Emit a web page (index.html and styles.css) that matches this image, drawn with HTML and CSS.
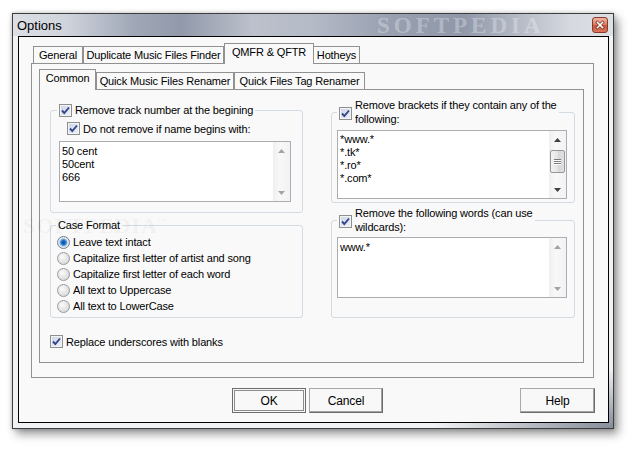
FILE: index.html
```html
<!DOCTYPE html>
<html>
<head>
<meta charset="utf-8">
<link rel="stylesheet" href="styles.css">
</head>
<body>
<div class="window">
  <div class="titlebar">
    <span class="title">Options</span>
    <span class="wm-title">SOFTPEDIA</span>
    <span class="close"><svg width="16" height="16" viewBox="0 0 16 16"><path d="M5 5 L11 11 M11 5 L5 11" stroke="#5a1a10" stroke-width="3.2" stroke-linecap="square"/><path d="M5 5 L11 11 M11 5 L5 11" stroke="#fff" stroke-width="1.8" stroke-linecap="square"/></svg></span>
  </div>
  <div class="client">
    <div class="otabs">
      <div class="strip">
        <div class="tab t-general">General</div>
        <div class="tab t-dup">Duplicate Music Files Finder</div>
        <div class="tab sel t-qmfr">QMFR &amp; QFTR</div>
        <div class="tab t-hot">Hotheys</div>
      </div>
      <div class="opanel">
        <div class="strip istrip">
          <div class="tab sel t-common">Common</div>
          <div class="tab t-qmr">Quick Music Files Renamer</div>
          <div class="tab t-qftr">Quick Files Tag Renamer</div>
        </div>
        <div class="ipanel">
          <div class="col left">
            <fieldset class="grp g1">
              <legend><span class="lg"><span class="cb"><svg viewBox="0 0 11 11"><path d="M2 5.5 L4.3 8 L9 2.5" /></svg></span><span class="lt">Remove track number at the begining</span></span></legend>
              <div class="row sub"><span class="cb"><svg viewBox="0 0 11 11"><path d="M2 5.5 L4.3 8 L9 2.5" /></svg></span><span class="lt">Do not remove if name begins with:</span></div>
              <div class="list l1">
                <div class="items p3">
                  <div>50 cent</div>
                  <div>50cent</div>
                  <div>666</div>
                </div>
                <div class="sb">
                  <div class="sbb"><svg width="7" height="4" viewBox="0 0 7 4"><path class="light" d="M0 4 L3.5 0 L7 4Z"/></svg></div>
                  <div class="sbb"><svg width="7" height="4" viewBox="0 0 7 4"><path class="light" d="M0 0 L3.5 4 L7 0Z"/></svg></div>
                </div>
              </div>
            </fieldset>
            <fieldset class="grp g2">
              <legend><span class="lg">Case Format</span></legend>
              <div class="opt"><span class="rb on"></span><span class="lt">Leave text intact</span></div>
              <div class="opt"><span class="rb"></span><span class="lt">Capitalize first letter of artist and song</span></div>
              <div class="opt"><span class="rb"></span><span class="lt">Capitalize first letter of each word</span></div>
              <div class="opt"><span class="rb"></span><span class="lt">All text to Uppercase</span></div>
              <div class="opt"><span class="rb"></span><span class="lt">All text to LowerCase</span></div>
            </fieldset>
            <div class="row repl"><span class="cb"><svg viewBox="0 0 11 11"><path d="M2 5.5 L4.3 8 L9 2.5" /></svg></span><span class="lt">Replace underscores with blanks</span></div>
          </div>
          <div class="col right">
            <fieldset class="grp r1">
              <legend><span class="lg lg2"><span class="cb"><svg viewBox="0 0 11 11"><path d="M2 5.5 L4.3 8 L9 2.5" /></svg></span><span class="lt">Remove brackets if they contain any of the<br>following:</span></span></legend>
              <div class="list rl1">
                <div class="items p2">
                  <div>*www.*</div>
                  <div>*.tk*</div>
                  <div>*.ro*</div>
                  <div>*.com*</div>
                </div>
                <div class="sb">
                  <div class="sbb"><svg width="7" height="4" viewBox="0 0 7 4"><path class="dark" d="M0 4 L3.5 0 L7 4Z"/></svg></div>
                  <div class="track"><div class="thumb"><span></span><span></span><span></span></div></div>
                  <div class="sbb"><svg width="7" height="4" viewBox="0 0 7 4"><path class="dark" d="M0 0 L3.5 4 L7 0Z"/></svg></div>
                </div>
              </div>
            </fieldset>
            <fieldset class="grp r2">
              <legend><span class="lg lg2"><span class="cb"><svg viewBox="0 0 11 11"><path d="M2 5.5 L4.3 8 L9 2.5" /></svg></span><span class="lt">Remove the following words (can use<br>wildcards):</span></span></legend>
              <div class="list rl2">
                <div class="items p3">
                  <div>www.*</div>
                </div>
                <div class="sb">
                  <div class="sbb"><svg width="7" height="4" viewBox="0 0 7 4"><path class="light" d="M0 4 L3.5 0 L7 4Z"/></svg></div>
                  <div class="sbb"><svg width="7" height="4" viewBox="0 0 7 4"><path class="light" d="M0 0 L3.5 4 L7 0Z"/></svg></div>
                </div>
              </div>
            </fieldset>
          </div>
        </div>
      </div>
    </div>
    <div class="buttons">
      <div class="btn default">OK</div>
      <div class="btn">Cancel</div>
      <div class="btn help">Help</div>
    </div>
  </div>
  <span class="wm-case">SOFTPEDIA<sup>™</sup></span>
</div>
</body>
</html>
```
FILE: styles.css
```css
body {
  margin: 0;
  width: 634px;
  height: 449px;
  overflow: hidden;
  background: #fff;
  font-family: "Liberation Sans", Arial, sans-serif;
  font-size: 11px;
  letter-spacing: -0.15px;
  color: #000;
}

.window {
  position: relative;
  box-sizing: border-box;
  width: 602px;
  height: 416px;
  margin: 13px 0 0 12px;
  padding: 0 4px 5px 5px;
  border: 1px solid #3e3e3e;
  display: flex;
  flex-direction: column;
  background: radial-gradient(ellipse 180px 60px at 100% 100%, #868d9a 0, rgba(134,141,154,0) 100%), #f1f2f4;
  box-shadow: 4px 5px 9px rgba(0,0,0,.42), 0 0 4px rgba(0,0,0,.22);
}

.titlebar {
  position: relative;
  height: 22px;
  margin: 0 -4px 0 -5px;
  padding: 0 5px 0 4px;
  display: flex;
  align-items: center;
  background: linear-gradient(to right, #dcdfe5 0%, #cfd3db 9%, #a0a8b8 20%, #9299aa 28%, #bcc1cc 40%, #b4bac6 50%, #9aa1b1 62%, #8f97a9 75%, #b8bdc8 85%, #d6d9df 93%, #dde0e5 100%);
}

.title {
  font-family: "Liberation Sans", Arial, sans-serif;
  font-size: 13px;
  letter-spacing: 0;
  position: relative;
  z-index: 1;
}

.wm-title {
  position: absolute;
  left: 364px;
  top: 0;
  height: 22px;
  line-height: 24px;
  font-family: "Liberation Serif", serif;
  font-weight: bold;
  font-size: 23px;
  letter-spacing: 4px;
  color: rgba(255,255,255,.3);
}

.close {
  margin-left: auto;
  width: 16px;
  height: 16px;
  box-sizing: border-box;
  border: 1px solid #8b3b2b;
  border-radius: 3px;
  background: linear-gradient(#f0b4a2, #d97a60 50%, #c4553b 51%, #d9775c);
  position: relative;
  z-index: 1;
  display: flex;
  align-items: center;
  justify-content: center;
}
.close svg { width: 14px; height: 14px; }

.client {
  flex: 1;
  border: 1px solid #000;
  background: #f9f9f9;
  display: flex;
  flex-direction: column;
}

.otabs {
  margin: 6px 0 0 12px;
  width: 563px;
}

.strip {
  display: flex;
  align-items: flex-end;
  height: 20px;
  padding-left: 2px;
}
.istrip { padding-left: 0; }

.tab {
  box-sizing: border-box;
  height: 17px;
  border: 1px solid #919191;
  border-bottom: none;
  background: #f9f9f9;
  text-align: center;
  line-height: 17px;
  white-space: nowrap;
}
.tab.sel {
  position: relative;
  z-index: 1;
  height: 21px;
  margin-bottom: -1px;
  line-height: 17px;
}
.t-general { width: 50px; }
.t-dup { width: 141px; }
.t-qmfr { width: 90px; }
.t-hot { width: 47px; margin-left: -1px; }
.t-common { width: 57px; }
.t-qmr { width: 138px; }
.t-qftr { width: 131px; }

.opanel {
  box-sizing: border-box;
  height: 315px;
  border: 1px solid #919191;
  padding: 5px 9px 0 7px;
}

.ipanel {
  box-sizing: border-box;
  height: 274px;
  border: 1px solid #919191;
  padding-left: 10px;
  display: flex;
  align-items: flex-start;
}

.col.left { width: 253px; margin-top: 14px; }
.col.right { width: 244px; margin-left: 28px; margin-top: 8px; }

.grp {
  margin: 0;
  padding: 0;
  min-width: 0;
  border: 1px solid #d3dae2;
  border-radius: 3px;
}
.grp legend {
  padding: 0 2px;
  margin-left: 5px;
}
.g1 legend { margin-left: 6px; }
.lg {
  display: flex;
  align-items: center;
  line-height: 13px;
  white-space: nowrap;
}
.lg2 { line-height: 14px; }
.lg2 .cb { margin-top: 3px; }

.row {
  display: flex;
  align-items: center;
  height: 13px;
}
.sub { margin: 5px 0 0 16px; }

.cb {
  box-sizing: border-box;
  flex: none;
  width: 13px;
  height: 13px;
  border: 1px solid #8e8f8f;
  background: linear-gradient(135deg, #cdd4e4, #eef1f7);
  box-shadow: inset 0 0 0 1px #f3f4f6;
  margin-right: 3px;
  display: flex;
  align-items: center;
  justify-content: center;
}
.cb svg { width: 11px; height: 11px; }
.cb path { fill: none; stroke: #34468e; stroke-width: 1.9; }

.rb {
  box-sizing: border-box;
  flex: none;
  width: 13px;
  height: 13px;
  border-radius: 50%;
  border: 1px solid #9a9a9a;
  background: radial-gradient(circle at 40% 35%, #fbfbfb 0, #e3e3e3 55%, #cfcfcf 100%);
  margin-right: 3px;
}
.rb.on {
  border-color: #6f7f95;
  background: radial-gradient(circle, #0b4c9b 0, #1d67bd 1.8px, #5fa3e6 3.2px, #a9cdf0 3.9px, #e4e4e4 4.4px, #f6f6f6 100%);
}

.opt {
  display: flex;
  align-items: center;
  height: 16px;
  padding-left: 6px;
}
.g2 { margin-top: 6px; padding-bottom: 3px; }
.g2 legend + .opt { margin-top: 2px; }

.repl { margin-top: 17px; }

.list {
  box-sizing: border-box;
  display: flex;
  border: 1px solid #abadb3;
  background: #fff;
}
.items { flex: 1; padding-left: 2px; line-height: 13px; }
.p2 { padding-top: 2px; }
.p3 { padding-top: 3px; }

.l1 { width: 232px; height: 61px; margin: 6px 0 10px 8px; }
.rl1 { width: 230px; height: 69px; margin: 4px 0 3px 5px; }
.rl2 { width: 230px; height: 61px; margin: 3px 0 19px 5px; }
.r2 { margin-top: 3px; }

.sb {
  width: 17px;
  display: flex;
  flex-direction: column;
  justify-content: space-between;
  background: linear-gradient(to right, #efefef, #f8f8f8 40%, #f2f2f2);
}
.sbb {
  height: 17px;
  display: flex;
  align-items: center;
  justify-content: center;
}
.sbb .light { fill: #a3a3a3; }
.sbb .dark { fill: #3f3f3f; }
.track { flex: 1; padding: 2px 1px 0; }
.thumb {
  box-sizing: border-box;
  height: 23px;
  border: 1px solid #979797;
  border-radius: 2px;
  background: linear-gradient(to right, #f2f2f2, #e4e4e4 50%, #d6d6d6 51%, #e0e0e0);
  display: flex;
  flex-direction: column;
  align-items: center;
  justify-content: center;
  gap: 1px;
}
.thumb span { display: block; width: 7px; height: 1px; background: #7c7c7c; box-shadow: 0 1px #fdfdfd; }

.buttons {
  display: flex;
  margin-top: 10px;
  padding: 0 13px 0 213px;
}
.btn {
  box-sizing: border-box;
  width: 74px;
  height: 25px;
  border: 1px solid #a8a8a8;
  border-right-color: #6c6c6c;
  border-bottom-color: #6c6c6c;
  box-shadow: inset -1px -1px #a3a3a3;
  background: #f8f8f8;
  display: flex;
  align-items: center;
  justify-content: center;
  font-size: 12px;
}
.btn + .btn { margin-left: 3px; }
.btn.default {
  border-color: #6c6c6c;
  box-shadow: inset 0 0 0 1px #f8f8f8, inset 0 0 0 2px #8c8c8c;
}
.btn.help { margin-left: auto; width: 75px; }

.wm-case {
  position: absolute;
  left: 10px;
  top: 199px;
  font-family: "Liberation Serif", serif;
  font-weight: bold;
  font-size: 22px;
  letter-spacing: 1px;
  color: rgba(0,0,0,.05);
  pointer-events: none;
}
.wm-case sup { font-size: 9px; }
```
